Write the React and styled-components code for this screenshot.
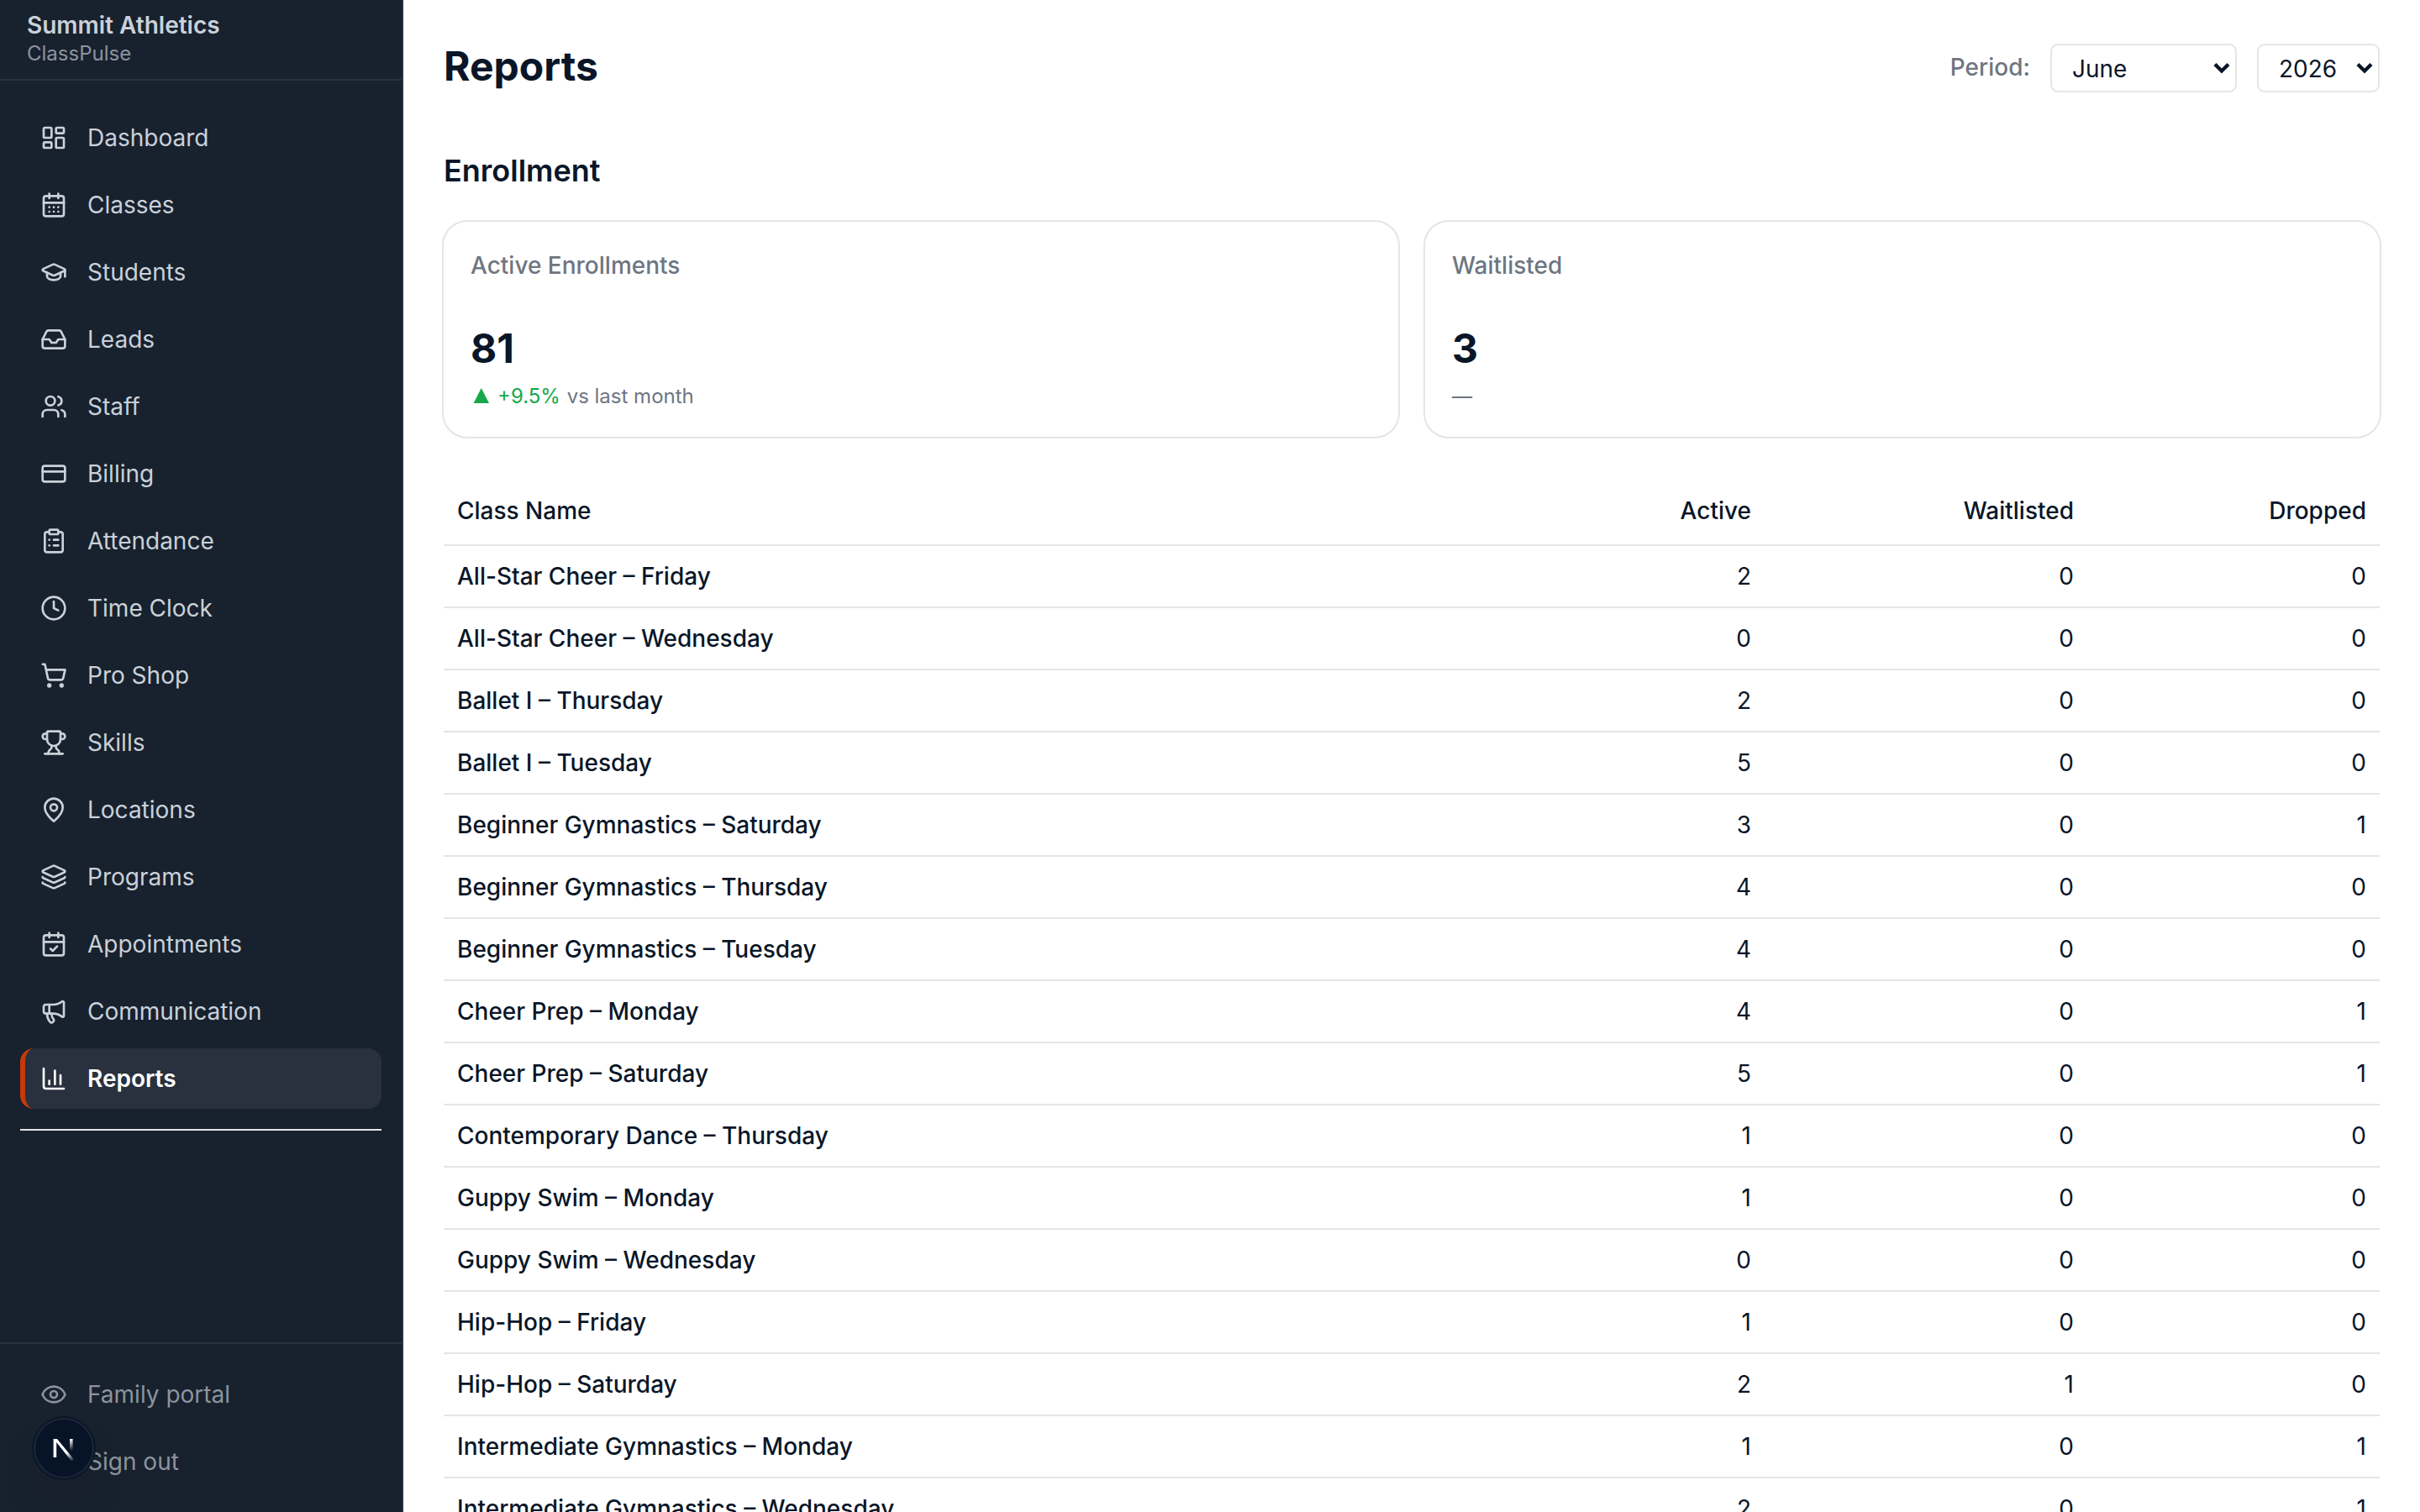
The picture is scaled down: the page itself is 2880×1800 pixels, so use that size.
import React from "react";
import styled, { createGlobalStyle } from "styled-components";
import {
  LayoutDashboard, CalendarDays, GraduationCap, Inbox, Users, CreditCard,
  ClipboardList, Clock, ShoppingCart, Trophy, MapPin, Layers, CalendarCheck,
  Megaphone, ChartColumn, Eye, LogOut,
} from "lucide-react";

const colors = {
  ink: "#0a1628",
  sidebar: "#18212e",
  sidebarLine: "#28313d",
  sidebarText: "#c9d1d9",
  sidebarMuted: "#8b949e",
  active: "#28313d",
  accent: "#c53a08",
  muted: "#6e7681",
  line: "#e5e5e5",
  green: "#16a84a",
};

const GlobalStyle = createGlobalStyle`
  *, *::before, *::after { box-sizing: border-box; }
  html, body { margin: 0; height: 100%; overflow: hidden; }
  body {
    background: #fff;
    color: ${colors.ink};
    font-family: Inter, "Liberation Sans", sans-serif;
    font-size: 28px;
    line-height: 40px;
    -webkit-font-smoothing: antialiased;
  }
`;

const Shell = styled.div`
  display: flex;
  height: 100vh;
  overflow: hidden;
`;

const Sidebar = styled.aside`
  width: 480px;
  flex: none;
  display: flex;
  flex-direction: column;
  background: ${colors.sidebar};
  border-right: 2px solid ${colors.sidebarLine};
`;

const Brand = styled.div`
  height: 96px;
  flex: none;
  display: flex;
  flex-direction: column;
  padding: 10px 32px 0;
  border-bottom: 2px solid ${colors.sidebarLine};
`;

const BrandName = styled.span`
  font-weight: 600;
  line-height: 40px;
  color: ${colors.sidebarText};
`;

const BrandProduct = styled.span`
  font-size: 24px;
  line-height: 28px;
  color: ${colors.sidebarMuted};
`;

const Nav = styled.nav`
  flex: 1;
  display: flex;
  flex-direction: column;
  gap: 8px;
  padding: 32px 24px;
`;

const NavItem = styled.a`
  display: flex;
  align-items: center;
  gap: 24px;
  height: 72px;
  padding: 0 24px 0 18px;
  border-left: 6px solid ${(p) => (p.$active ? colors.accent : "transparent")};
  border-radius: 16px;
  background: ${(p) => (p.$active ? colors.active : "transparent")};
  color: ${(p) => (p.$active ? "#fff" : p.$muted ? colors.sidebarMuted : colors.sidebarText)};
  font-weight: ${(p) => (p.$active ? 600 : 400)};

  svg { flex: none; }
`;

const NavDivider = styled.hr`
  width: 100%;
  height: 2px;
  margin: 16px 0 0;
  border: 0;
  background: ${colors.line};
`;

const SidebarFooter = styled.div`
  flex: none;
  display: flex;
  flex-direction: column;
  gap: 8px;
  padding: 24px;
  border-top: 2px solid ${colors.sidebarLine};
`;

const DevBadge = styled.div`
  position: fixed;
  left: 40px;
  bottom: 40px;
  width: 72px;
  height: 72px;
  display: grid;
  place-items: center;
  border-radius: 50%;
  background: #071326;
  box-shadow: 0 0 0 2px #0a1628, inset 0 0 0 2px #1c2838,
    0 32px 64px -16px rgba(0, 0, 0, 0.24);
`;

const Main = styled.main`
  flex: 1;
  min-width: 0;
  padding: 48px;
  overflow: hidden;
`;

const PageHeader = styled.header`
  display: flex;
  align-items: flex-start;
  justify-content: space-between;
  height: 64px;
`;

const PageTitle = styled.h1`
  margin: 0;
  font-size: 48px;
  line-height: 62px;
  font-weight: 700;
`;

const Filters = styled.div`
  display: flex;
  align-items: center;
  gap: 24px;
  margin-top: 4px;
`;

const FilterLabel = styled.span`
  line-height: 38px;
  padding-bottom: 2px;
  font-weight: 500;
  color: ${colors.muted};
`;

const SelectBox = styled.div`
  display: grid;
  align-items: center;
  width: ${(p) => p.$width}px;

  > * { grid-area: 1 / 1; }
  > svg { justify-self: end; margin-right: 8px; pointer-events: none; }
`;

const Select = styled.select`
  appearance: none;
  width: 100%;
  height: 58px;
  padding: 1px 24px 0;
  border: 2px solid ${colors.line};
  border-radius: 9px;
  background: #fff;
  color: ${colors.ink};
  font: inherit;
`;

const SectionTitle = styled.h2`
  margin: 63px 0 33px;
  font-size: 36px;
  line-height: 56px;
  font-weight: 600;
`;

const Cards = styled.section`
  display: grid;
  grid-template-columns: 1fr 1fr;
  gap: 32px;
`;

const Card = styled.article`
  height: 256px;
  padding: 32px;
  display: flex;
  flex-direction: column;
  border-radius: 28px;
  background: #fff;
  box-shadow: 0 0 0 2px ${colors.line};
`;

const CardLabel = styled.div`
  font-weight: 500;
  color: ${colors.muted};
`;

const CardValue = styled.div`
  margin-top: auto;
  font-size: 48px;
  line-height: 64px;
  font-weight: 700;
`;

const CardNote = styled.div`
  margin-top: 9px;
  font-size: 24px;
  line-height: 32px;
  color: ${colors.muted};
`;

const Rise = styled.span`
  margin-right: 1px;
  color: ${colors.green};
`;

const RiseMark = styled.svg`
  width: 25px;
  height: 18px;
  margin-right: 7px;
  vertical-align: 0;
  fill: ${colors.green};
`;

const Table = styled.table`
  width: 100%;
  margin-top: 48px;
  border-collapse: separate;
  border-spacing: 0;
  table-layout: fixed;
`;

const Col = styled.col`
  width: ${(p) => (p.$width ? `${p.$width}px` : "auto")};
`;

const HeadCell = styled.th`
  height: 82px;
  padding: 0 16px;
  border-bottom: 2px solid ${colors.line};
  font-weight: 500;
  text-align: ${(p) => (p.$numeric ? "right" : "left")};
`;

const Cell = styled.td`
  height: 74px;
  padding: 0 16px;
  border-bottom: 2px solid ${colors.line};
  font-weight: ${(p) => (p.$numeric ? 400 : 500)};
  text-align: ${(p) => (p.$numeric ? "right" : "left")};
`;

const navItems = [
  ["Dashboard", LayoutDashboard],
  ["Classes", CalendarDays],
  ["Students", GraduationCap],
  ["Leads", Inbox],
  ["Staff", Users],
  ["Billing", CreditCard],
  ["Attendance", ClipboardList],
  ["Time Clock", Clock],
  ["Pro Shop", ShoppingCart],
  ["Skills", Trophy],
  ["Locations", MapPin],
  ["Programs", Layers],
  ["Appointments", CalendarCheck],
  ["Communication", Megaphone],
  ["Reports", ChartColumn],
];

const classes = [
  ["All-Star Cheer – Friday", 2, 0, 0],
  ["All-Star Cheer – Wednesday", 0, 0, 0],
  ["Ballet I – Thursday", 2, 0, 0],
  ["Ballet I – Tuesday", 5, 0, 0],
  ["Beginner Gymnastics – Saturday", 3, 0, 1],
  ["Beginner Gymnastics – Thursday", 4, 0, 0],
  ["Beginner Gymnastics – Tuesday", 4, 0, 0],
  ["Cheer Prep – Monday", 4, 0, 1],
  ["Cheer Prep – Saturday", 5, 0, 1],
  ["Contemporary Dance – Thursday", 1, 0, 0],
  ["Guppy Swim – Monday", 1, 0, 0],
  ["Guppy Swim – Wednesday", 0, 0, 0],
  ["Hip-Hop – Friday", 1, 0, 0],
  ["Hip-Hop – Saturday", 2, 1, 0],
  ["Intermediate Gymnastics – Monday", 1, 0, 1],
  ["Intermediate Gymnastics – Wednesday", 2, 0, 1],
];

function Dropdown({ value, width }) {
  return (
    <SelectBox $width={width}>
      <Select defaultValue={value}>
        <option>{value}</option>
      </Select>
      <svg width="20" height="14" viewBox="0 0 20 14" fill="none">
        <path d="M2 2.5 10 10.5 18 2.5" stroke={colors.ink} strokeWidth="4.4" />
      </svg>
    </SelectBox>
  );
}

function NextMark() {
  return (
    <svg width="26" height="32" viewBox="0 0 26 32" fill="none">
      <defs>
        <linearGradient id="diag" x1="17" y1="21" x2="24.5" y2="31" gradientUnits="userSpaceOnUse">
          <stop stopColor="#fff" />
          <stop offset="1" stopColor="#fff" stopOpacity="0" />
        </linearGradient>
        <linearGradient id="stem" x1="0" y1="5" x2="0" y2="19" gradientUnits="userSpaceOnUse">
          <stop stopColor="#fff" />
          <stop offset="1" stopColor="#fff" stopOpacity="0" />
        </linearGradient>
      </defs>
      <path d="M2.4 27V5" stroke="#fff" strokeWidth="3.6" />
      <path d="M.6 5H5L25.5 30 22.5 32 4.2 9Z" fill="url(#diag)" />
      <path d="M21.8 5V19" stroke="url(#stem)" strokeWidth="3.6" />
    </svg>
  );
}

export default function App() {
  return (
    <>
      <GlobalStyle />
      <Shell>
        <Sidebar>
          <Brand>
            <BrandName>Summit Athletics</BrandName>
            <BrandProduct>ClassPulse</BrandProduct>
          </Brand>
          <Nav>
            {navItems.map(([label, Icon]) => (
              <NavItem key={label} $active={label === "Reports"}>
                <Icon size={32} strokeWidth={2} />
                {label}
              </NavItem>
            ))}
            <NavDivider />
          </Nav>
          <SidebarFooter>
            <NavItem $muted>
              <Eye size={32} strokeWidth={2} />
              Family portal
            </NavItem>
            <NavItem $muted>
              <LogOut size={32} strokeWidth={2} />
              Sign out
            </NavItem>
          </SidebarFooter>
        </Sidebar>
        <Main>
          <PageHeader>
            <PageTitle>Reports</PageTitle>
            <Filters>
              <FilterLabel>Period:</FilterLabel>
              <Dropdown value="June" width={222} />
              <Dropdown value="2026" width={146} />
            </Filters>
          </PageHeader>
          <SectionTitle>Enrollment</SectionTitle>
          <Cards>
            <Card>
              <CardLabel>Active Enrollments</CardLabel>
              <CardValue>81</CardValue>
              <CardNote>
                <Rise>
                  <RiseMark viewBox="0 0 25 18">
                    <path d="M12.8 0 22 18H3.6Z" />
                  </RiseMark>
                  +9.5%
                </Rise>{" "}
                vs last month
              </CardNote>
            </Card>
            <Card>
              <CardLabel>Waitlisted</CardLabel>
              <CardValue>3</CardValue>
              <CardNote>—</CardNote>
            </Card>
          </Cards>
          <Table>
            <colgroup>
              <Col />
              <Col $width={300} />
              <Col $width={384} />
              <Col $width={348} />
            </colgroup>
            <thead>
              <tr>
                <HeadCell>Class Name</HeadCell>
                <HeadCell $numeric>Active</HeadCell>
                <HeadCell $numeric>Waitlisted</HeadCell>
                <HeadCell $numeric>Dropped</HeadCell>
              </tr>
            </thead>
            <tbody>
              {classes.map(([name, ...counts]) => (
                <tr key={name}>
                  <Cell>{name}</Cell>
                  {counts.map((count, i) => (
                    <Cell key={i} $numeric>{count}</Cell>
                  ))}
                </tr>
              ))}
            </tbody>
          </Table>
        </Main>
      </Shell>
      <DevBadge>
        <NextMark />
      </DevBadge>
    </>
  );
}
